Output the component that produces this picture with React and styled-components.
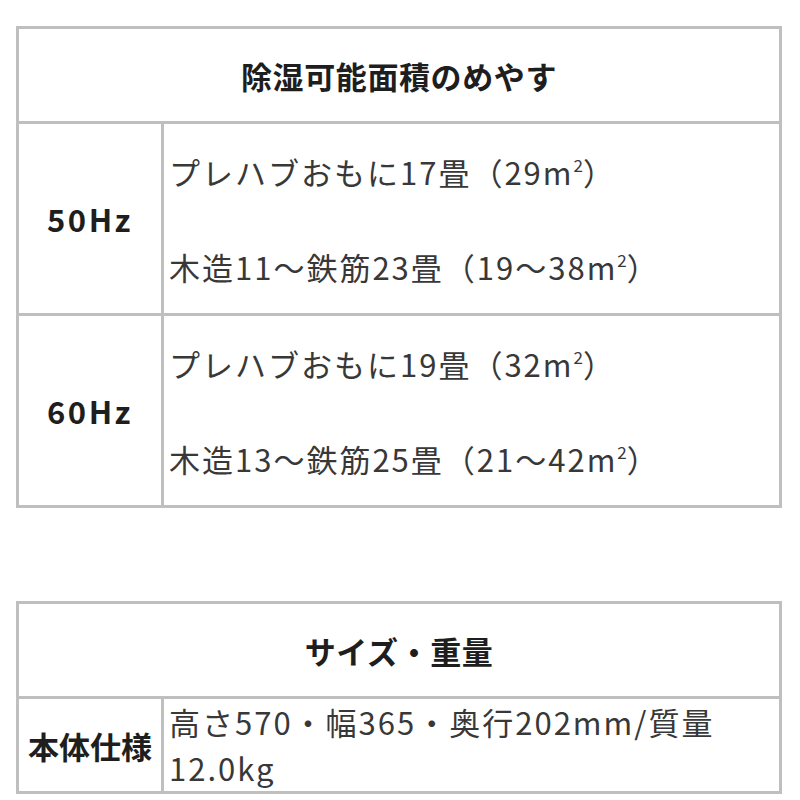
import styled, { createGlobalStyle } from "styled-components";

const GlobalStyle = createGlobalStyle`
  html, body {
    margin: 0;
    padding: 0;
    background: #ffffff;
  }
  body {
    font-family: "Noto Sans CJK JP", "Noto Sans", sans-serif;
    color: #333333;
  }
`;

const Page = styled.div`
  width: 800px;
  padding: 26px 18px 0 16px;
  box-sizing: border-box;
  display: flex;
  flex-direction: column;
  gap: 93px;
`;

const Table = styled.table`
  width: 766px;
  border-collapse: collapse;
  border: 3px solid #bfbfbf;
  table-layout: fixed;
`;

const LabelCol = styled.col`
  width: 145px;
`;

const HeadCell = styled.th`
  height: 92px;
  padding: 0;
  border: 3px solid #bfbfbf;
  font-size: 31px;
  font-weight: 700;
  letter-spacing: 0.6px;
  color: #1e1e1e;
  text-align: center;
  vertical-align: middle;
`;

const Label = styled.th`
  padding: 0;
  border: 3px solid #bfbfbf;
  font-size: 31px;
  font-weight: 700;
  letter-spacing: ${(p) => (p.$latin ? "2.5px" : "0")};
  color: #1e1e1e;
  text-align: center;
  vertical-align: middle;
`;

const Value = styled.td`
  padding: ${(p) => (p.$tight ? "0 8px 0 5px" : "24px 8px 23px 5px")};
  border: 3px solid #bfbfbf;
  font-size: 31px;
  line-height: ${(p) => (p.$tight ? "46px" : "47px")};
  letter-spacing: 2px;
  color: #383838;
  vertical-align: middle;
`;

const Line = styled.p`
  margin: 0;
  & + & {
    margin-top: 48px;
  }
`;

const Sup = styled.sup`
  font-size: 0.55em;
  line-height: 0;
  letter-spacing: 0;
  vertical-align: 0.75em;
`;

const area = [
  {
    hz: "50Hz",
    lines: [
      ["プレハブおもに17畳（29m", "）"],
      ["木造11～鉄筋23畳（19～38m", "）"],
    ],
  },
  {
    hz: "60Hz",
    lines: [
      ["プレハブおもに19畳（32m", "）"],
      ["木造13～鉄筋25畳（21～42m", "）"],
    ],
  },
];

export default function App() {
  return (
    <>
      <GlobalStyle />
      <Page>
        <Table>
          <colgroup>
            <LabelCol />
            <col />
          </colgroup>
          <thead>
            <tr>
              <HeadCell colSpan={2}>除湿可能面積のめやす</HeadCell>
            </tr>
          </thead>
          <tbody>
            {area.map((row) => (
              <tr key={row.hz}>
                <Label $latin>{row.hz}</Label>
                <Value>
                  {row.lines.map(([a, b]) => (
                    <Line key={a}>
                      {a}
                      <Sup>2</Sup>
                      {b}
                    </Line>
                  ))}
                </Value>
              </tr>
            ))}
          </tbody>
        </Table>

        <Table>
          <colgroup>
            <LabelCol />
            <col />
          </colgroup>
          <thead>
            <tr>
              <HeadCell colSpan={2}>サイズ・重量</HeadCell>
            </tr>
          </thead>
          <tbody>
            <tr>
              <Label>本体仕様</Label>
              <Value $tight>
                高さ570・幅365・奥行202mm/質量
                <br />
                12.0kg
              </Value>
            </tr>
          </tbody>
        </Table>
      </Page>
    </>
  );
}
